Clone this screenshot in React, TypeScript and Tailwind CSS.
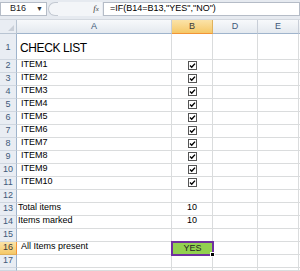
import React from "react";

const F = { fontFamily: '"Liberation Sans", Arial, sans-serif' };

function Check() {
  return (
    <svg width="9" height="9" viewBox="0 0 9 9" className="block">
      <rect x="0.5" y="0.5" width="8" height="8" fill="#fff" stroke="#555" />
      <path d="M2 4.6 L3.7 6.2 L7 2.6" fill="none" stroke="#000" strokeWidth="1.4" />
    </svg>
  );
}

type RowProps = {
  n: number;
  h?: number;
  a?: React.ReactNode;
  b?: React.ReactNode;
  aClass?: string;
  sel?: boolean;
};

function Row({ n, h = 13, a, b, aClass = "", sel = false }: RowProps) {
  const hc = h === 26 ? "h-[26px]" : h === 3 ? "h-[3px]" : "h-[13px]";
  return (
    <>
      <div
        className={`${hc} flex items-center justify-center border-b border-r text-[9px] ${
          sel
            ? "bg-gradient-to-b from-[#fbe3a8] to-[#f5c866] border-r-[#f29436] border-b-[#e0b25c] text-[#3c3c3c]"
            : "bg-[#e9edf3] border-r-[#9fb4cc] border-b-[#d0d7e0] text-[#40597a]"
        }`}
      >
        {h !== 3 ? <span className={h === 26 ? "pt-[2px]" : ""}>{n}</span> : null}
      </div>
      <div className={`${hc} flex items-end pb-[1px] border-b border-r border-[#dadcdd] bg-white text-[9px] text-black overflow-hidden whitespace-nowrap ${aClass}`}>
        {a}
      </div>
      <div className={`${hc} border-b border-r border-[#dadcdd] bg-white`}>{b}</div>
      <div className={`${hc} border-b border-r border-[#dadcdd] bg-white`} />
      <div className={`${hc} border-b border-r border-[#dadcdd] bg-white`} />
      <div className={`${hc} border-b border-[#dadcdd] bg-white`} />
    </>
  );
}

const CheckCell = () => (
  <div className="h-full flex justify-center items-start pt-[1px]">
    <Check />
  </div>
);

const NumCell = ({ v }: { v: string }) => (
  <div className="h-full flex justify-center items-end pb-[1px] text-[9px] text-black">{v}</div>
);

export default function App() {
  const items = Array.from({ length: 10 }, (_, i) => i + 1);
  return (
    <div className="w-[300px] h-[271px] overflow-hidden bg-white" style={F}>
      {/* formula bar */}
      <div className="h-[20px] bg-[#e6eaf0] flex items-start pt-[2px] border-b border-[#d3d8df]">
        <div className="w-[47px] h-[14px] bg-white border border-[#b5bcc7] flex items-center justify-between pl-[9px] pr-[3px] text-[9px] text-[#222]">
          <span>B16</span>
          <span className="text-[7px] text-[#333]">▼</span>
        </div>
        <div className="ml-[1px] w-[10px] h-[14px] rounded-l-full border border-r-0 border-[#c3c9d2] bg-[#f3f5f8]" />
        <div className="w-[32px] h-[14px] bg-[#f3f5f8]" />
        <div className="w-[12px] h-[14px] bg-[#f3f5f8] flex items-center justify-center text-[9px] italic text-[#444]" style={{ fontFamily: '"Liberation Serif", serif' }}>
          <span>f<span className="text-[7px]">x</span></span>
        </div>
        <div className="flex-1 h-[14px] ml-[1px] bg-white border border-[#b5bcc7] pl-[6px] flex items-center text-[9px] text-black whitespace-nowrap">
          =IF(B14=B13,"YES","NO")
        </div>
      </div>
      {/* grid */}
      <div className="grid grid-cols-[17px_155px_41px_45px_41px_1fr]">
        {/* header */}
        <div className="h-[14px] bg-[#e9edf3] border-r border-b border-[#b8c4d2] relative">
          <div className="absolute right-[2px] bottom-[2px] w-0 h-0 border-l-[6px] border-l-transparent border-b-[6px] border-b-[#c9cfd8]" />
        </div>
        <div className="h-[14px] flex items-center justify-center bg-gradient-to-b from-[#f7f9fb] to-[#e4e9ef] border-r border-b border-r-[#c8ced7] border-b-[#9fb4cc] text-[9px] text-[#40597a]">A</div>
        <div className="h-[14px] flex items-center justify-center bg-gradient-to-b from-[#fbe3a8] to-[#f5c866] border-r border-b border-r-[#e0b25c] border-b-[#f29436] text-[9px] text-[#3c3c3c]">B</div>
        <div className="h-[14px] flex items-center justify-center bg-gradient-to-b from-[#f7f9fb] to-[#e4e9ef] border-r border-b border-r-[#c8ced7] border-b-[#9fb4cc] text-[9px] text-[#40597a]">D</div>
        <div className="h-[14px] flex items-center justify-center bg-gradient-to-b from-[#f7f9fb] to-[#e4e9ef] border-r border-b border-r-[#c8ced7] border-b-[#9fb4cc] text-[9px] text-[#40597a]">E</div>
        <div className="h-[14px] bg-gradient-to-b from-[#f7f9fb] to-[#e4e9ef] border-b border-b-[#9fb4cc]" />

        <Row n={1} h={26} a={<span className="text-[12px] tracking-[-0.4px] pl-[3px] pb-[1px]">CHECK LIST</span>} />
        {items.map((i) => (
          <Row key={i} n={i + 1} a={<span className="pl-[4px]">ITEM{i}</span>} b={<CheckCell />} />
        ))}
        <Row n={12} />
        <Row n={13} a={<span className="pl-[1px]">Total items</span>} b={<NumCell v="10" />} />
        <Row n={14} a={<span className="pl-[1px]">Items marked</span>} b={<NumCell v="10" />} />
        <Row n={15} />
        <Row
          n={16}
          sel
          a={<span className="pl-[4px]">All Items present</span>}
          b={
            <div className="relative h-full">
              <div className="absolute -left-[1px] -top-[1px] w-[43px] h-[15px] bg-[#92d050] border-2 border-[#7030a0] flex items-center justify-center text-[9px] text-[#222]">
                YES
              </div>
              <div className="absolute -right-[3px] -bottom-[3px] w-[5px] h-[5px] bg-black border border-white" />
            </div>
          }
        />
        <Row n={17} />
        <Row n={18} h={3} />
      </div>
    </div>
  );
}
